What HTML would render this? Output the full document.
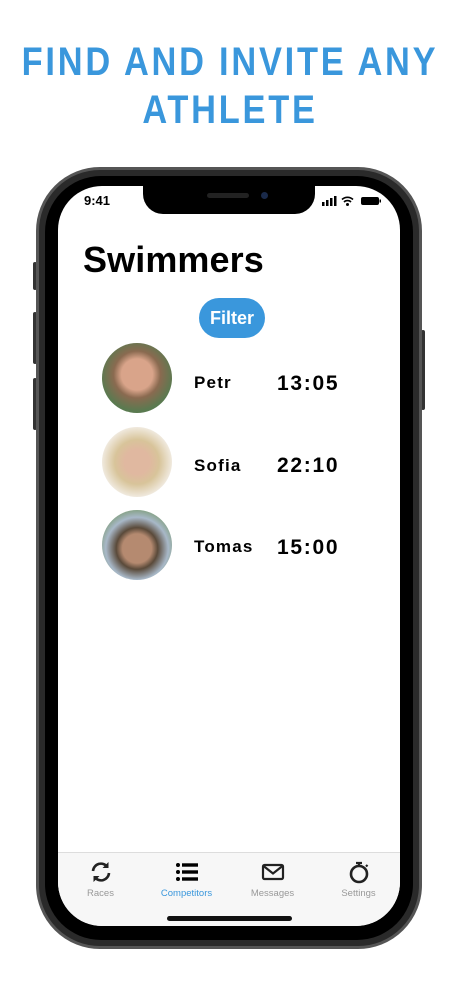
<!DOCTYPE html>
<html><head><meta charset="utf-8"><style>
*{margin:0;padding:0;box-sizing:border-box}
body{width:460px;height:996px;background:#fff;font-family:"Liberation Sans",sans-serif;position:relative;overflow:hidden}
.h{position:absolute;left:-100px;width:660px;text-align:center;color:#3a97dc;font-weight:bold;font-size:40px;letter-spacing:3.2px;transform:scaleX(0.86);white-space:nowrap}
.frame{position:absolute;left:36px;top:167px;width:386px;height:782px;border-radius:64px;background:#2a2a2a;border:3px solid #555}
.bezel{position:absolute;left:45px;top:176px;width:368px;height:764px;border-radius:56px;background:#000}
.screen{position:absolute;left:58px;top:186px;width:342px;height:740px;border-radius:44px;background:#fff;overflow:hidden}
.notch{position:absolute;left:85px;top:0;width:172px;height:28px;background:#000;border-radius:0 0 20px 20px}
.btn{position:absolute;background:#333;width:4px;border-radius:2px}
.av{position:absolute;left:44px;width:70px;height:70px;border-radius:50%}
.nm{position:absolute;left:136px;font-size:17px;font-weight:bold;letter-spacing:1.2px}
.tm{position:absolute;left:219px;font-size:21px;font-weight:bold;letter-spacing:1.7px}
.tab{position:absolute;top:0;width:85px;text-align:center;font-size:9.5px;color:#999}
</style></head><body>
<div class="h" style="top:40px">FIND AND INVITE ANY</div>
<div class="h" style="top:88px">ATHLETE</div>
<div class="btn" style="left:33px;top:262px;height:28px"></div>
<div class="btn" style="left:33px;top:312px;height:52px"></div>
<div class="btn" style="left:33px;top:378px;height:52px"></div>
<div class="btn" style="left:421px;top:330px;height:80px"></div>
<div class="frame"></div>
<div class="bezel"></div>
<div class="screen">
 <div class="notch"><div style="position:absolute;left:64px;top:7px;width:42px;height:5px;border-radius:3px;background:#222"></div><div style="position:absolute;left:118px;top:6px;width:7px;height:7px;border-radius:50%;background:#1a2a4a"></div></div>
 <div style="position:absolute;left:26px;top:7px;font-size:13px;font-weight:bold">9:41</div>
 <svg style="position:absolute;left:264px;top:9px" width="60" height="12" viewBox="0 0 60 12"><rect x="0" y="7" width="2.5" height="4" fill="#000"/><rect x="4" y="5" width="2.5" height="6" fill="#000"/><rect x="8" y="3" width="2.5" height="8" fill="#000"/><rect x="12" y="1" width="2.5" height="10" fill="#000"/><path d="M20 4.5a8 8 0 0 1 11 0M22 7a5 5 0 0 1 7 0" stroke="#000" stroke-width="1.6" fill="none"/><circle cx="25.5" cy="9.5" r="1.5"/><rect x="39" y="2" width="18" height="8" rx="2" fill="#000"/><rect x="57.5" y="4.5" width="1.5" height="3" fill="#000"/></svg>
 <div style="position:absolute;left:25px;top:53px;font-size:36px;font-weight:bold;letter-spacing:0.1px">Swimmers</div>
 <div style="position:absolute;left:141px;top:112px;width:66px;height:40px;border-radius:20px;background:#3a97dc;color:#fff;font-weight:bold;font-size:18px;text-align:center;line-height:40px">Filter</div>
 <div class="av" style="top:157px;background:radial-gradient(circle at 50% 45%,#d9a48a 0 30%,#8a6a50 45%,#5a7a50 70%)"></div>
 <div class="nm" style="top:187px">Petr</div><div class="tm" style="top:186px">13:05</div>
 <div class="av" style="top:241px;background:radial-gradient(circle at 50% 50%,#e0b8a0 0 25%,#d8c49a 45%,#f4f0ea 75%)"></div>
 <div class="nm" style="top:270px">Sofia</div><div class="tm" style="top:268px">22:10</div>
 <div class="av" style="top:324px;background:radial-gradient(circle at 50% 55%,#b58a70 0 28%,#5a4a3a 40%,#a8b8c8 60%,#7a9a70 80%)"></div>
 <div class="nm" style="top:351px">Tomas</div><div class="tm" style="top:350px">15:00</div>
 <div style="position:absolute;left:0;top:666px;width:342px;height:74px;background:#f7f7f7;border-top:1px solid #ddd">
  <div class="tab" style="left:0"><svg width="24" height="24" viewBox="0 0 24 24" style="margin-top:7px"><path d="M4 11a8 8 0 0 1 14.5-4M20 13a8 8 0 0 1-14.5 4" stroke="#222" stroke-width="2.6" fill="none"/><path d="M19.5 2v6h-6z M4.5 22v-6h6z" fill="#222"/></svg><div style="margin-top:1px">Races</div></div>
  <div class="tab" style="left:86px;color:#3a97dc"><svg width="24" height="24" viewBox="0 0 24 24" style="margin-top:7px"><circle cx="3" cy="5" r="2"/><circle cx="3" cy="12" r="2"/><circle cx="3" cy="19" r="2"/><rect x="7" y="3.3" width="16" height="3.4"/><rect x="7" y="10.3" width="16" height="3.4"/><rect x="7" y="17.3" width="16" height="3.4"/></svg><div style="margin-top:1px">Competitors</div></div>
  <div class="tab" style="left:172px"><svg width="24" height="24" viewBox="0 0 24 24" style="margin-top:7px"><rect x="2" y="5" width="20" height="14" rx="1.5" stroke="#222" stroke-width="2.2" fill="none"/><path d="M2.5 6l9.5 7.5 9.5-7.5" stroke="#222" stroke-width="2.2" fill="none"/></svg><div style="margin-top:1px">Messages</div></div>
  <div class="tab" style="left:258px"><svg width="24" height="24" viewBox="0 0 24 24" style="margin-top:7px"><circle cx="12" cy="14" r="8" stroke="#222" stroke-width="2.6" fill="none"/><path d="M9 3h6M12 3v3M19 5l1.5 1.5" stroke="#222" stroke-width="2.2" fill="none"/></svg><div style="margin-top:1px">Settings</div></div>
  <div style="position:absolute;left:109px;top:63px;width:125px;height:5px;border-radius:3px;background:#111"></div>
 </div>
</div>
</body></html>
